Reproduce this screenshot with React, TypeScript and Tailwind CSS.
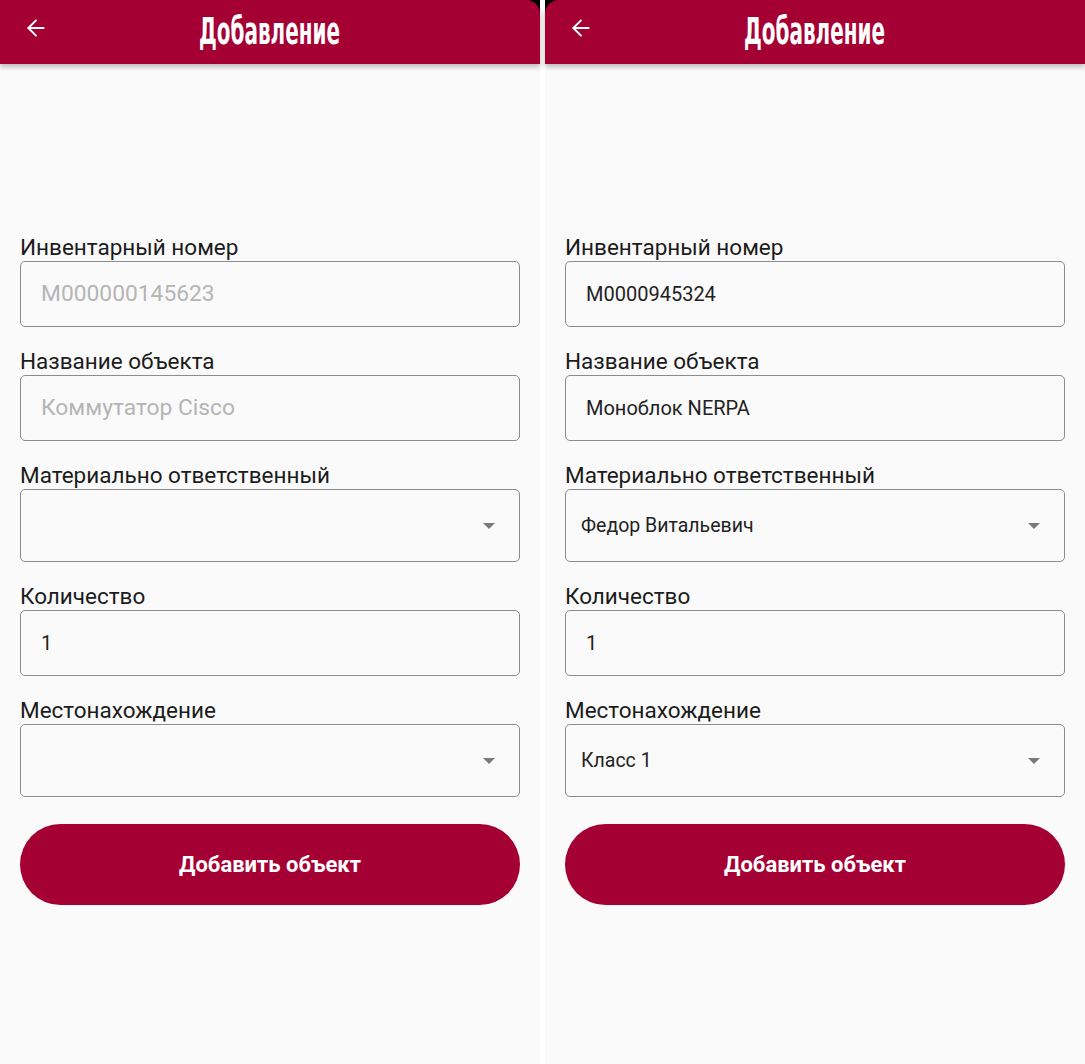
import React from "react";
import { ArrowLeft } from "lucide-react";

type Field = {
  label: string;
  value?: string;
  placeholder?: string;
  select?: boolean;
};

const Header = ({ corner }: { corner: "left" | "right" }) => {
  return (
    <div className="bg-black">
      <div
        className={`relative h-[64px] bg-[#a50034] flex items-center justify-center shadow-[0_3px_5px_rgba(0,0,0,0.25)] ${
          corner === "left" ? "rounded-tr-[14px]" : "rounded-tl-[14px]"
        }`}
      >
        <ArrowLeft
          size={26}
          strokeWidth={1.8}
          className="absolute left-[23px] top-[15px] text-white"
        />
        <span className="font-['Liberation_Sans_Narrow','DejaVu_Sans_Condensed',sans-serif] font-bold text-[37px] leading-none text-white inline-block scale-x-[0.6] -mt-[2px]">
          Добавление
        </span>
      </div>
    </div>
  );
};

const Caret = () => (
  <svg width="14" height="8" viewBox="0 0 14 8" className="shrink-0">
    <path d="M1 1h12L7 7z" fill="#7a7a7a" />
  </svg>
);

const FormField = ({ field }: { field: Field }) => {
  return (
    <div className="flex flex-col">
      <label className="text-[22.5px] leading-[26px] text-[#1c1c1c] mb-[1px]">
        {field.label}
      </label>
      {field.select ? (
        <div className="h-[73px] border border-[#8c8c8c] rounded-[5px] flex items-center justify-between pl-[15px] pr-[23px]">
          <span className="text-[19.5px] text-[#222]">{field.value}</span>
          <Caret />
        </div>
      ) : (
        <div className="h-[66px] border border-[#8c8c8c] rounded-[5px] flex items-center px-[20px]">
          {field.value ? (
            <span className="text-[20px] text-[#222]">{field.value}</span>
          ) : (
            <span className="text-[22.8px] text-[#b5b5b5]">{field.placeholder}</span>
          )}
        </div>
      )}
    </div>
  );
};

const Screen = ({ fields, corner }: { fields: Field[]; corner: "left" | "right" }) => {
  return (
    <div className="w-[540px] h-full bg-[#fafafa] flex flex-col">
      <Header corner={corner} />
      <div className="flex flex-col gap-[21px] px-[20px] pt-[170px]">
        {fields.map((f) => (
          <FormField key={f.label} field={f} />
        ))}
        <button className="mt-[6px] h-[81px] rounded-full bg-[#a50034] text-white text-[22px] font-bold">
          Добавить объект
        </button>
      </div>
    </div>
  );
};

export default function App() {
  const empty: Field[] = [
    { label: "Инвентарный номер", placeholder: "M000000145623" },
    { label: "Название объекта", placeholder: "Коммутатор Cisco" },
    { label: "Материально ответственный", select: true },
    { label: "Количество", value: "1" },
    { label: "Местонахождение", select: true },
  ];
  const filled: Field[] = [
    { label: "Инвентарный номер", value: "M0000945324" },
    { label: "Название объекта", value: "Моноблок NERPA" },
    { label: "Материально ответственный", value: "Федор Витальевич", select: true },
    { label: "Количество", value: "1" },
    { label: "Местонахождение", value: "Класс 1", select: true },
  ];
  return (
    <div className="w-[1085px] h-[1064px] flex gap-[5px] bg-white overflow-hidden font-['Roboto',sans-serif]">
      <Screen fields={empty} corner="left" />
      <Screen fields={filled} corner="right" />
    </div>
  );
}
